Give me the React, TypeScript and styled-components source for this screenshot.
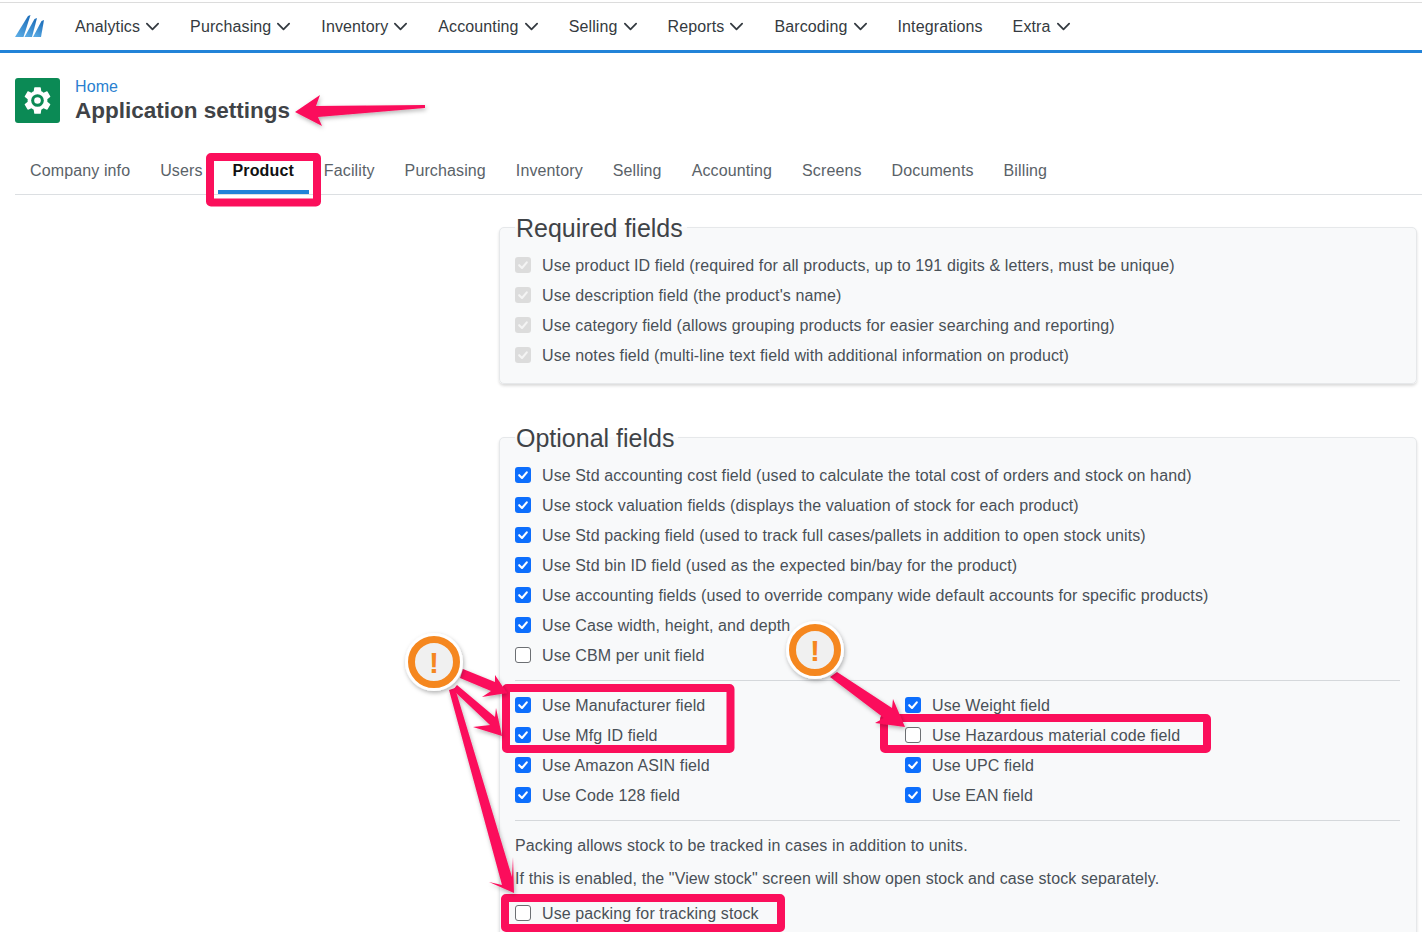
import React from "react";
import styled, { createGlobalStyle } from "styled-components";

const Global = createGlobalStyle`
  html, body { margin: 0; padding: 0; background: #fff; }
  body { font-family: "Liberation Sans", Arial, sans-serif; font-size: 16px; color: #495057; }
`;

const Page = styled.div`
  position: relative;
  width: 1422px;
  height: 932px;
  overflow: hidden;
  background: #fff;
`;

const TopBar = styled.nav`
  display: flex;
  align-items: center;
  height: 47px;
  margin-top: 2px;
  border-top: 1px solid #dcdcdc;
  border-bottom: 3px solid #2283d8;
  padding-left: 15px;
`;

const LogoMark = styled.svg`
  width: 29px;
  height: 23px;
  margin-right: 31px;
  flex: none;
`;

const NavList = styled.div`
  display: flex;
  gap: 30px;
`;

const NavItem = styled.div`
  display: flex;
  align-items: center;
  gap: 5px;
  color: #343a40;
  letter-spacing: 0.12px;
  white-space: nowrap;
`;

const Chevron = styled.svg`
  width: 15px;
  height: 15px;
`;

const PageHead = styled.header`
  display: flex;
  align-items: flex-start;
  gap: 15px;
  padding: 25px 15px 0;
`;

const AppIcon = styled.div`
  width: 45px;
  height: 45px;
  border-radius: 3px;
  background: #0b8a55;
  display: flex;
  align-items: center;
  justify-content: center;
`;

const Crumb = styled.div`
  color: #2a7fd0;
  line-height: 18px;
  letter-spacing: 0.1px;
`;

const Title = styled.h1`
  margin: 0;
  font-size: 22.5px;
  font-weight: 700;
  line-height: 30px;
  color: #3f4347;
`;

const Tabs = styled.div`
  display: flex;
  margin: 23px 0 0 15px;
  height: 45px;
  border-bottom: 1px solid #dcdfe2;
`;

const Tab = styled.div<{ $active?: boolean }>`
  height: 45px;
  box-sizing: border-box;
  padding: 13px 15px 0;
  line-height: 18px;
  letter-spacing: 0.12px;
  white-space: nowrap;
  font-weight: ${(p) => (p.$active ? 700 : 400)};
  color: ${(p) => (p.$active ? "#111" : "#5a6268")};
  border-bottom: ${(p) => (p.$active ? "4px solid #2283d8" : "none")};
`;

const Content = styled.main`
  padding: 15px 5px 0 499px;
`;

const Group = styled.fieldset`
  margin: 0 0 36px;
  padding: 6px 16px 12px 15px;
  min-width: 0;
  background: #f8f9fa;
  border: 1px solid #e6e8ea;
  border-radius: 5px;
  box-shadow: 0 2px 3px rgba(0, 0, 0, 0.14);
`;

const GroupTitle = styled.legend`
  padding: 2px 4px 0 1px;
  font-size: 25px;
  line-height: 33px;
  color: #3f4347;
`;

const Row = styled.label`
  display: flex;
  align-items: center;
  gap: 11px;
  height: 30px;
  color: #495057;
  letter-spacing: 0.11px;
  white-space: nowrap;
`;

const Box = styled.span<{ $state: "on" | "off" | "locked" }>`
  flex: none;
  width: 16px;
  height: 16px;
  margin-bottom: 2px;
  box-sizing: border-box;
  border-radius: 3px;
  display: flex;
  align-items: center;
  justify-content: center;
  background: ${(p) => (p.$state === "on" ? "#0d6efd" : p.$state === "locked" ? "#dcdcdc" : "#fff")};
  border: ${(p) => (p.$state === "off" ? "1.5px solid #6c6f73" : "none")};
`;

const Rule = styled.hr`
  margin: 9px 0 10px;
  border: 0;
  border-top: 1px solid #d5d8db;
`;

const TwoCols = styled.div`
  display: grid;
  grid-template-columns: 390px 1fr;
`;

const Notes = styled.div`
  padding-top: 5px;
`;

const Note = styled.p<{ $gap: number }>`
  margin: 0 0 ${(p) => p.$gap}px;
  height: 20px;
  line-height: 20px;
  color: #495057;
  letter-spacing: 0.11px;
  white-space: nowrap;
`;

const Markup = styled.svg`
  position: absolute;
  inset: 0;
  width: 1422px;
  height: 932px;
  pointer-events: none;
`;

const BadgeMark = styled.text`
  font-family: "Liberation Sans", Arial, sans-serif;
  font-size: 30px;
  font-weight: 700;
  fill: #f5871f;
`;

function Check({ state }: { state: "on" | "off" | "locked" }) {
  return (
    <Box $state={state}>
      {state !== "off" && (
        <svg width="12" height="12" viewBox="0 0 12 12">
          <path
            d="M2.2 6.2 L5 9 L9.8 3.4"
            fill="none"
            stroke={state === "on" ? "#fff" : "#f4f4f4"}
            strokeWidth="2.1"
            strokeLinecap="round"
            strokeLinejoin="round"
          />
        </svg>
      )}
    </Box>
  );
}

function Field({ label, state = "on" }: { label: string; state?: "on" | "off" | "locked" }) {
  return (
    <Row>
      <Check state={state} />
      {label}
    </Row>
  );
}

const navItems = ["Analytics", "Purchasing", "Inventory", "Accounting", "Selling", "Reports", "Barcoding"];
const tabs = ["Company info", "Users", "Product", "Facility", "Purchasing", "Inventory", "Selling", "Accounting", "Screens", "Documents", "Billing"];

function Down() {
  return (
    <Chevron viewBox="0 0 16 16">
      <path d="M2 5 L8 11 L14 5" fill="none" stroke="#343a40" strokeWidth="1.9" strokeLinecap="round" strokeLinejoin="round" />
    </Chevron>
  );
}

function Gear() {
  return (
    <svg width="33" height="33" viewBox="0 0 24 24">
      <path
        fill="#fff"
        d="M19.14 12.94c.04-.3.06-.61.06-.94 0-.32-.02-.64-.07-.94l2.03-1.58a.49.49 0 0 0 .12-.61l-1.92-3.32a.488.488 0 0 0-.59-.22l-2.39.96c-.5-.38-1.03-.7-1.62-.94l-.36-2.54a.484.484 0 0 0-.48-.41h-3.84c-.24 0-.43.17-.47.41l-.36 2.54c-.59.24-1.13.57-1.62.94l-2.39-.96c-.22-.08-.47 0-.59.22L2.74 8.87c-.12.21-.08.47.12.61l2.03 1.58c-.05.3-.09.63-.09.94s.02.64.07.94l-2.03 1.58a.49.49 0 0 0-.12.61l1.92 3.32c.12.22.37.29.59.22l2.39-.96c.5.38 1.03.7 1.62.94l.36 2.54c.05.24.24.41.48.41h3.84c.24 0 .44-.17.47-.41l.36-2.54c.59-.24 1.13-.56 1.62-.94l2.39.96c.22.08.47 0 .59-.22l1.92-3.32c.12-.22.07-.47-.12-.61l-2.01-1.58z"
      />
      <circle cx="12" cy="12" r="4.6" fill="#0b8a55" />
      <circle cx="12" cy="12" r="2.4" fill="#fff" />
    </svg>
  );
}

function Badge({ x, y }: { x: number; y: number }) {
  return (
    <g>
      <circle cx={x} cy={y} r="29" fill="#fff" filter="url(#soft)" />
      <circle cx={x} cy={y} r="22.5" fill="#f0f0f0" stroke="#f5871f" strokeWidth="7" />
      <BadgeMark x={x} y={y + 11} textAnchor="middle">!</BadgeMark>
    </g>
  );
}

const red = "#fb0f5b";

export default function App() {
  return (
    <Page>
      <Global />
      <TopBar>
        <LogoMark viewBox="0 0 29 23">
          <defs>
            <linearGradient id="lg" x1="0" y1="1" x2="0.5" y2="0">
              <stop offset="0" stopColor="#5fb0e8" />
              <stop offset="1" stopColor="#2273bd" />
            </linearGradient>
          </defs>
          <path d="M0 22 L8.5 22 L15.5 0 L13 1 Z" fill="url(#lg)" />
          <path d="M9.5 22 L17 22 L22 3 L19.5 4 Z" fill="url(#lg)" />
          <path d="M18 22 L26 22 L29 5 L26.5 6 Z" fill="url(#lg)" />
        </LogoMark>
        <NavList>
          {navItems.map((n) => (
            <NavItem key={n}>
              {n}
              <Down />
            </NavItem>
          ))}
          <NavItem>Integrations</NavItem>
          <NavItem>
            Extra
            <Down />
          </NavItem>
        </NavList>
      </TopBar>

      <PageHead>
        <AppIcon>
          <Gear />
        </AppIcon>
        <div>
          <Crumb>Home</Crumb>
          <Title>Application settings</Title>
        </div>
      </PageHead>

      <Tabs>
        {tabs.map((t) => (
          <Tab key={t} $active={t === "Product"}>
            {t}
          </Tab>
        ))}
      </Tabs>

      <Content>
        <Group>
          <GroupTitle>Required fields</GroupTitle>
          <Field state="locked" label="Use product ID field (required for all products, up to 191 digits & letters, must be unique)" />
          <Field state="locked" label="Use description field (the product's name)" />
          <Field state="locked" label="Use category field (allows grouping products for easier searching and reporting)" />
          <Field state="locked" label="Use notes field (multi-line text field with additional information on product)" />
        </Group>
        <Group>
          <GroupTitle>Optional fields</GroupTitle>
          <Field label="Use Std accounting cost field (used to calculate the total cost of orders and stock on hand)" />
          <Field label="Use stock valuation fields (displays the valuation of stock for each product)" />
          <Field label="Use Std packing field (used to track full cases/pallets in addition to open stock units)" />
          <Field label="Use Std bin ID field (used as the expected bin/bay for the product)" />
          <Field label="Use accounting fields (used to override company wide default accounts for specific products)" />
          <Field label="Use Case width, height, and depth" />
          <Field state="off" label="Use CBM per unit field" />
          <Rule />
          <TwoCols>
            <Field label="Use Manufacturer field" />
            <Field label="Use Weight field" />
            <Field label="Use Mfg ID field" />
            <Field state="off" label="Use Hazardous material code field" />
            <Field label="Use Amazon ASIN field" />
            <Field label="Use UPC field" />
            <Field label="Use Code 128 field" />
            <Field label="Use EAN field" />
          </TwoCols>
          <Rule />
          <Notes>
            <Note $gap={13}>Packing allows stock to be tracked in cases in addition to units.</Note>
            <Note $gap={10}>If this is enabled, the "View stock" screen will show open stock and case stock separately.</Note>
          </Notes>
          <Field state="off" label="Use packing for tracking stock" />
        </Group>
      </Content>

      <Markup viewBox="0 0 1422 932">
        <defs>
          <filter id="soft" x="-30%" y="-30%" width="160%" height="160%">
            <feDropShadow dx="1" dy="2" stdDeviation="2" floodColor="#000" floodOpacity="0.3" />
          </filter>
        </defs>
        <g fill="none" stroke={red} strokeWidth="8" strokeLinejoin="round">
          <rect x="210" y="157" width="107" height="45.5" rx="1" />
          <rect x="506" y="688" width="224.5" height="61" rx="1" />
          <rect x="884" y="718" width="323" height="31" rx="1" />
          <rect x="505" y="898" width="276" height="30" rx="1" />
        </g>
        <g fill={red} filter="url(#soft)">
          <path d="M295 112 L320 95 L316 106 L425 105 L425 108 L318 117 L322 126 Z" />
          <path d="M463 669 L495 682 L495 675 L507 693 L482 697 L491 691 L460 678 Z" />
          <path d="M457 685 L495 717 L496 708 L502 736 L473 727 L490 725 L453 690 Z" />
          <path d="M455 688 L512 877 L513 857 L514 893 L489 882 L502 885 L449 690 Z" />
          <path d="M837 672 L892 708 L893 699 L905 727 L875 723 L884 718 L830 677 Z" />
        </g>
        <Badge x={434} y={662} />
        <Badge x={815} y={650} />
      </Markup>
    </Page>
  );
}
